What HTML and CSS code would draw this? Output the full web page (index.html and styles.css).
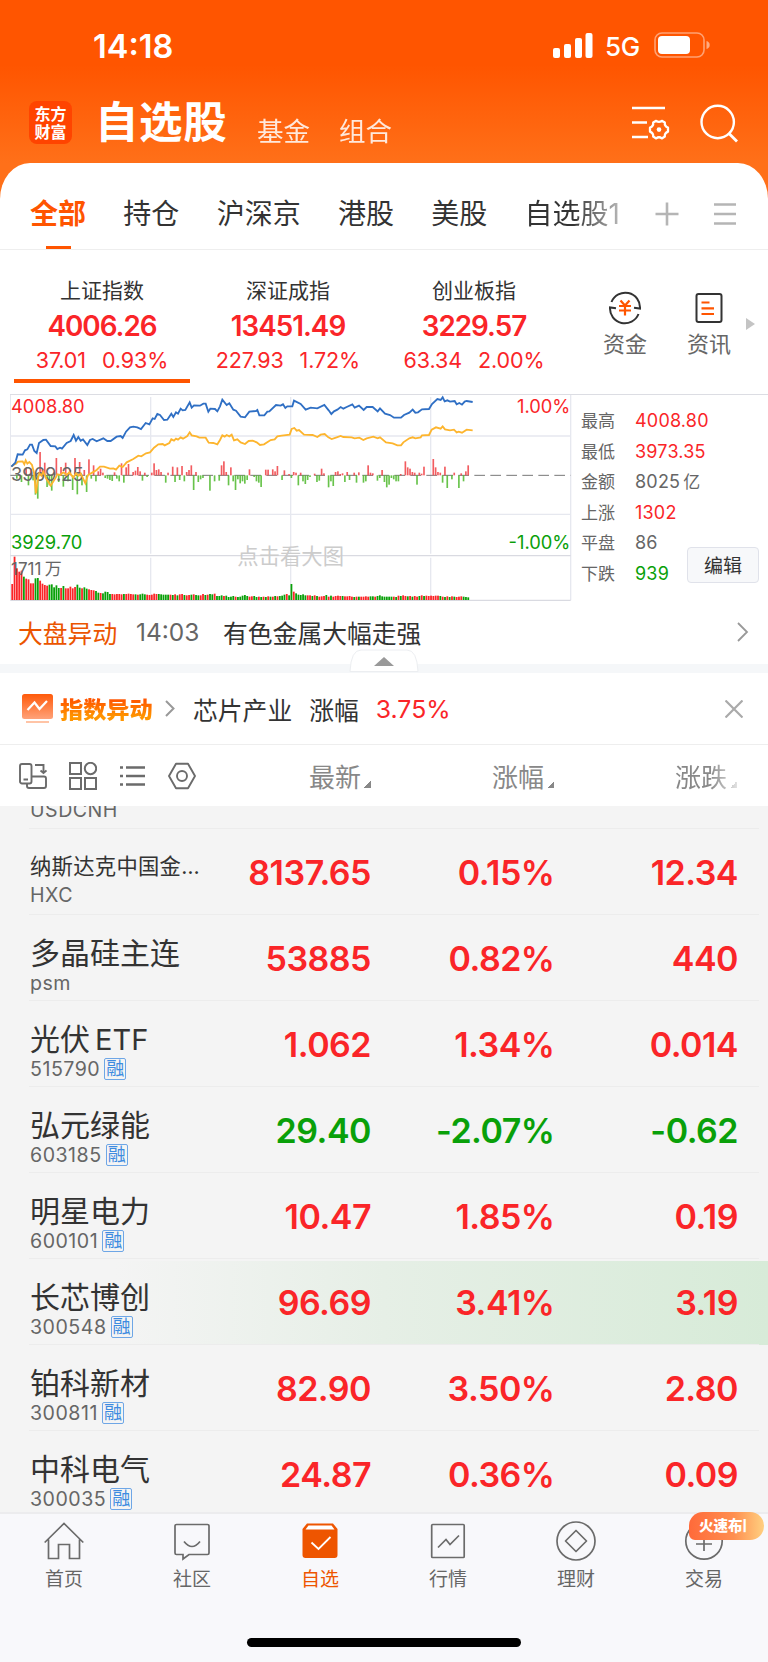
FILE: index.html
```html
<!DOCTYPE html>
<html lang="zh-CN">
<head>
  <meta charset="utf-8">
  <title>自选股</title>
  <link rel="stylesheet" href="styles.css">
</head>
<body>
  <header class="header">
    <div class="status">
      <span class="time">14:18</span>
      <svg class="signal" width="40" height="25" viewBox="0 0 40 25" fill="#fff">
        <rect x="0" y="15" width="7" height="10" rx="2"/>
        <rect x="11" y="11" width="7" height="14" rx="2"/>
        <rect x="22" y="5" width="7" height="20" rx="2"/>
        <rect x="32.500" y="0" width="7" height="25" rx="2"/>
      </svg>
      <span class="net">5G</span>
      <svg class="battery" width="57" height="26" viewBox="0 0 57 26">
        <rect x="1" y="1" width="49" height="24" rx="7" fill="none" stroke="#fff" stroke-opacity=".45" stroke-width="1.600"/>
        <rect x="4" y="4" width="32" height="18" rx="4" fill="#fff"/>
        <path d="M52.500 9v8c2-.6 3.200-2 3.200-4s-1.200-3.400-3.200-4z" fill="#fff" fill-opacity=".5"/>
      </svg>
    </div>
    <div class="title-bar">
      <div class="logo"><span>东方</span><span>财富</span></div>
      <h1>自选股</h1>
      <a class="sub">基金</a>
      <a class="sub">组合</a>
      <svg class="manage" width="40" height="36" viewBox="0 0 40 36" fill="none" stroke="#fff" stroke-width="2.500">
        <path d="M1 3h33M1 17.500h15M1 32h16"/>
        <path d="M25.200 15.800q2.800 2.200 5.600 0l3 1.800q-.4 3.600 3.200 5v4q-3.600 1.400-3.200 5l-3 1.800q-2.800-2.200-5.600 0l-3-1.800q.4-3.600-3.200-5v-4q3.600-1.400 3.200-5z" stroke-linejoin="round" stroke-width="2.300"/>
        <circle cx="28" cy="24.600" r="2.300" fill="#fff" stroke="none"/>
      </svg>
      <svg class="search" width="38" height="39" viewBox="0 0 38 39" fill="none" stroke="#fff" stroke-width="2.400">
        <circle cx="17.700" cy="18" r="16.200"/>
        <path d="M29 29.500l8 8" stroke-width="2.800"/>
      </svg>
    </div>
  </header>

  <main class="panel">
    <nav class="groups">
      <a class="active">全部</a>
      <a>持仓</a>
      <a>沪深京</a>
      <a>港股</a>
      <a>美股</a>
      <a class="fade">自选股1</a>
      <svg class="add" width="24" height="24" viewBox="0 0 24 24" stroke="#b5b5b5" stroke-width="2.600"><path d="M.5 12h23M12 .5v23"/></svg>
      <svg class="menu" width="22" height="22" viewBox="0 0 22 22" stroke="#b5b5b5" stroke-width="2.400"><path d="M0 1.500h22M0 11h22M0 20.500h22"/></svg>
    </nav>

    <section class="indexes">
      <div class="index active">
        <div class="name">上证指数</div>
        <div class="value">4006.26</div>
        <div class="change"><span>37.01</span><span>0.93%</span></div>
      </div>
      <div class="index">
        <div class="name">深证成指</div>
        <div class="value">13451.49</div>
        <div class="change"><span>227.93</span><span>1.72%</span></div>
      </div>
      <div class="index">
        <div class="name">创业板指</div>
        <div class="value">3229.57</div>
        <div class="change"><span>63.34</span><span>2.00%</span></div>
      </div>
      <div class="shortcut funds">
        <svg width="34" height="34" viewBox="0 0 34 34" fill="none" stroke="#333" stroke-width="2">
          <path d="M3.500 11A14.800 14.800 0 0 1 32 17.500l-6-.8M30.500 23A14.800 14.800 0 0 1 2 16.500l6 .8"/>
          <path d="M12.500 9.500l4.500 5 4.500-5M11 15h12M11 19.500h12M17 14.500v10" stroke="#ff5500" stroke-width="2.200"/>
        </svg>
        <span>资金</span>
      </div>
      <div class="shortcut">
        <svg width="28" height="34" viewBox="0 0 28 34" fill="none" stroke="#333" stroke-width="2">
          <rect x="1.500" y="3" width="25" height="28" rx="2"/>
          <path d="M6.500 11.500h8M6.500 17.300h12.500M6.500 23h12.500" stroke="#ff5500" stroke-width="2.200"/>
        </svg>
        <span>资讯</span>
      </div>
      <svg class="more" width="9" height="12" viewBox="0 0 9 12"><path d="M0 0l9 6-9 6z" fill="#c4c4c4"/></svg>
    </section>

    <section class="market">
      <svg class="chart" id="chart" viewBox="30 30 1686 624">
        <path class="grid" d="M31 28V646M452 36V506M452 518V646M872 36V506M872 518V646M1292 36V506M1292 518V646M1712 28V646M31 153H1712M31 388H1712"/>
        <path class="frame" d="M31 512H1712M31 646H1712"/>
        <path class="zero" d="M31 271H1712"/>
        <g id="bars"></g>
        <text class="up" x="33" y="84">4008.80</text>
        <text class="flat" x="33" y="288">3969.25</text>
        <text class="down" x="33" y="492">3929.70</text>
        <text class="flat vol" x="33" y="569">1711<tspan dx="10">万</tspan></text>
        <text class="up" x="1711" y="84" text-anchor="end">1.00%</text>
        <text class="down" x="1711" y="492" text-anchor="end">-1.00%</text>
        <text class="hint" x="872" y="536" text-anchor="middle">点击看大图</text>
        <polyline class="avg" points="34,245 40,240 48,236 54,230 68,229 73,238 77,226 82,236 88,231 96,240 102,263 108,325 114,280 118,265 124,272 130,260 138,280 152,302 166,280 172,268 180,270 190,262 200,270 208,262 220,278 228,265 236,272 242,265 256,295 264,270 278,262 290,255 300,245 312,245 330,251 340,250 348,254 358,242 368,246 380,232 400,222 415,212 424,214 438,205 450,202 462,188 475,178 488,177 494,181 508,174 514,163 522,167 528,161 534,164 542,157 549,161 562,153 569,142 575,151 590,154 598,158 617,158 626,173 640,174 652,178 660,165 667,151 674,155 680,150 688,154 695,149 702,166 712,163 722,172 735,177 746,168 758,167 770,172 780,180 792,178 812,165 824,163 832,154 845,152 869,149 875,132 883,129 890,137 897,135 912,149 938,150 952,156 962,149 974,147 985,157 995,162 1010,157 1022,153 1030,156 1055,157 1064,160 1078,158 1090,165 1100,160 1120,155 1133,160 1140,157 1158,172 1178,175 1192,181 1203,181 1210,172 1228,160 1238,157 1246,160 1262,157 1266,151 1287,150 1295,134 1308,127 1322,131 1328,124 1335,133 1350,136 1362,134 1370,142 1376,140 1386,143 1400,134 1418,136"/>
        <polyline class="price" points="34,245 46,233 53,208 68,209 75,196 82,193 90,179 96,179 103,198 110,204 117,174 130,165 138,164 152,183 166,184 172,192 180,188 186,191 200,174 212,168 221,150 228,167 235,156 242,167 249,163 262,180 270,165 278,162 290,169 310,160 322,168 332,168 350,155 362,153 368,159 378,140 390,127 400,125 412,127 423,132 437,114 448,118 458,100 464,102 472,87 480,90 492,105 502,104 514,86 520,96 528,82 534,86 542,71 548,76 556,75 569,52 575,68 582,61 600,62 610,56 617,56 625,80 631,71 645,72 652,79 660,64 667,44 680,60 688,55 700,74 708,77 722,95 735,97 748,80 768,78 772,75 778,91 793,91 802,80 808,79 828,60 842,62 849,58 856,69 862,64 877,64 882,47 902,57 917,74 932,68 952,70 973,60 986,76 994,87 1002,79 1012,74 1022,66 1030,71 1040,66 1057,58 1064,68 1077,62 1091,75 1100,66 1118,66 1133,79 1140,70 1155,86 1170,90 1182,98 1203,98 1212,90 1228,83 1238,74 1246,83 1254,82 1266,73 1287,72 1296,57 1312,42 1322,45 1328,37 1334,49 1342,46 1350,50 1364,48 1370,58 1378,54 1386,59 1394,50 1400,48 1418,51"/>
      </svg>
      <div class="stats">
        <dl>
          <dt>最高</dt><dd class="up">4008.80</dd>
          <dt>最低</dt><dd class="up">3973.35</dd>
          <dt>金额</dt><dd>8025<small>亿</small></dd>
          <dt>上涨</dt><dd class="up">1302</dd>
          <dt>平盘</dt><dd>86</dd>
          <dt>下跌</dt><dd class="down">939</dd>
        </dl>
        <button class="edit">编辑</button>
      </div>
    </section>

    <section class="news">
      <span class="tag">大盘异动</span>
      <span class="at">14:03</span>
      <span class="text">有色金属大幅走强</span>
      <svg class="go" width="12" height="20" viewBox="0 0 12 20" fill="none" stroke="#999" stroke-width="1.800"><path d="M1 1l9 9-9 9"/></svg>
    </section>
    <div class="strip">
      <svg class="handle" width="70" height="24" viewBox="0 0 70 24">
        <path d="M1 22.500Q2 1 12 1h46q10 0 11 21.500z" fill="#fff" stroke="#eceef1"/>
        <path d="M25 17l10-9 10 9z" fill="#999"/>
      </svg>
    </div>

    <section class="alert">
      <svg class="alert-icon" width="31" height="30" viewBox="0 0 31 30">
        <defs><linearGradient id="g" x1="0" y1="0" x2="0" y2="1"><stop offset="0" stop-color="#ff5a0a"/><stop offset="1" stop-color="#ffa27a"/></linearGradient></defs>
        <rect width="31" height="25" rx="2.500" fill="url(#g)"/>
        <path d="M5.500 16l7-7.500 5 6.500 7.500-8" fill="none" stroke="#fff" stroke-width="2.200"/>
        <path d="M4 28h23" stroke="#ffc4a6" stroke-width="2"/>
      </svg>
      <b>指数异动</b>
      <svg class="chev" width="10" height="17" viewBox="0 0 10 17" fill="none" stroke="#999" stroke-width="2"><path d="M1 1l7.500 7.500L1 16"/></svg>
      <span class="sector">芯片产业</span>
      <span class="label">涨幅</span>
      <span class="rate">3.75%</span>
      <svg class="close" width="18" height="18" viewBox="0 0 18 18" stroke="#aaa" stroke-width="2.200"><path d="M.5.5l17 17M17.500.5l-17 17"/></svg>
    </section>

    <section class="columns">
      <div class="tools">
        <svg width="28" height="28" viewBox="0 0 28 28" fill="none" stroke="#6b6b6b" stroke-width="1.900">
          <rect x="1" y="2" width="11.500" height="19.500" rx="2"/>
          <path d="M4.500 17.500h4.500M16 3h8.500v7.500M21.500 8.500l3 2.500 3-2.500M13 14.500h12q2 0 2 2v7.500q0 2-2 2H10q-2 0-2-2V22"/>
        </svg>
        <svg width="28" height="28" viewBox="0 0 28 28" fill="none" stroke="#6b6b6b" stroke-width="2">
          <rect x="1" y="1" width="11" height="11"/><circle cx="21.500" cy="6.500" r="5.700"/>
          <rect x="1" y="16" width="11" height="11"/><rect x="16" y="16" width="11" height="11"/>
        </svg>
        <svg width="28" height="28" viewBox="0 0 28 28" fill="none" stroke="#6b6b6b" stroke-width="2.700">
          <path d="M2 5.500h3M2 14h3M2 22.500h3M8 5.500h19M8 14h19M8 22.500h19"/>
        </svg>
        <svg width="28" height="28" viewBox="0 0 28 28" fill="none" stroke="#6b6b6b" stroke-width="1.900" stroke-linejoin="round">
          <path d="M8 1.700h12L27 14l-7 12.300H8L1 14z"/><circle cx="14" cy="14" r="5"/>
        </svg>
      </div>
      <span class="col">最新<i></i></span>
      <span class="col">涨幅<i></i></span>
      <span class="col last">涨跌<i></i></span>
    </section>

    <section class="list">
      <div class="row cut"><div class="stock"><small>USDCNH</small></div></div>
      <div class="row up">
        <div class="stock"><strong class="long">纳斯达克中国金…</strong><small>HXC</small></div>
        <span>8137.65</span><span>0.15%</span><span>12.34</span>
      </div>
      <div class="row up">
        <div class="stock"><strong>多晶硅主连</strong><small>psm</small></div>
        <span>53885</span><span>0.82%</span><span>440</span>
      </div>
      <div class="row up">
        <div class="stock"><strong>光伏<em>ETF</em></strong><small>515790<i>融</i></small></div>
        <span>1.062</span><span>1.34%</span><span>0.014</span>
      </div>
      <div class="row down">
        <div class="stock"><strong>弘元绿能</strong><small>603185<i>融</i></small></div>
        <span>29.40</span><span>-2.07%</span><span>-0.62</span>
      </div>
      <div class="row up">
        <div class="stock"><strong>明星电力</strong><small>600101<i>融</i></small></div>
        <span>10.47</span><span>1.85%</span><span>0.19</span>
      </div>
      <div class="row up flash">
        <div class="stock"><strong>长芯博创</strong><small>300548<i>融</i></small></div>
        <span>96.69</span><span>3.41%</span><span>3.19</span>
      </div>
      <div class="row up">
        <div class="stock"><strong>铂科新材</strong><small>300811<i>融</i></small></div>
        <span>82.90</span><span>3.50%</span><span>2.80</span>
      </div>
      <div class="row up">
        <div class="stock"><strong>中科电气</strong><small>300035<i>融</i></small></div>
        <span>24.87</span><span>0.36%</span><span>0.09</span>
      </div>
    </section>
  </main>

  <footer class="footer">
    <nav class="tabbar">
      <a>
        <svg width="40" height="40" viewBox="0 0 40 40"><path d="M.7 21.500L20 2.500l19.300 19M4.500 18.500v19h10V23.500h11v14h10v-19"/></svg>
        首页
      </a>
      <a>
        <svg width="40" height="40" viewBox="0 0 40 40"><path d="M4.500 3.500h31q1.500 0 1.500 1.500v27q0 1.500-1.500 1.500H17L11 38v-4.500H4.500Q3 33.500 3 32V5q0-1.500 1.500-1.500zM12 20.500q8 10 16 0"/></svg>
        社区
      </a>
      <a class="active">
        <svg class="solid" width="40" height="40" viewBox="0 0 40 40"><path d="M7 2.500h26l4.500 5.500v26q0 3-3 3h-29q-3 0-3-3V8z"/><path d="M8.500 4.500h23l3 4h-29z" fill="#fff"/><path d="M11.500 21.500l7 6.500L30.500 16" fill="none" stroke="#fff" stroke-width="1.800"/></svg>
        自选
      </a>
      <a>
        <svg width="40" height="40" viewBox="0 0 40 40"><rect x="3.700" y="3.500" width="32.500" height="33" rx="1"/><path d="M10 26.500l8-8 4 5 9-9"/></svg>
        行情
      </a>
      <a>
        <svg width="40" height="40" viewBox="0 0 40 40"><circle cx="20" cy="20" r="19"/><path d="M20 9.500L30.500 20 20 30.500 9.500 20z" stroke-linejoin="round"/></svg>
        理财
      </a>
      <a>
        <svg width="40" height="40" viewBox="0 0 40 40"><circle cx="20" cy="20" r="18.200"/><path d="M12 17.500h16M12 23h16M20 12v18M13 9l7 8 7-8"/></svg>
        交易
        <span class="promo">火速布<small>|</small></span>
      </a>
    </nav>
    <div class="home-bar"></div>
  </footer>
  <script src="chart.js"></script>
</body>
</html>
```
FILE: styles.css
```css
* {
  box-sizing: border-box;
}

body {
  margin: 0;
  width: 768px;
  height: 1662px;
  overflow: hidden;
  background: #fff;
  color: #333;
  font-family: Inter, "Noto Sans CJK SC", sans-serif;
}

svg {
  display: block;
  flex: none;
}

.up {
  color: #fa2528;
  fill: #fa2528;
}

.down {
  color: #09a009;
  fill: #09a009;
}

/* header */
.header {
  height: 204px;
  background: linear-gradient(#ff5500 65px, #ff7019 163px);
  color: #fff;
}

.status {
  display: flex;
  align-items: center;
  height: 93px;
}

.time {
  width: 460px;
  padding-left: 93px;
  font-size: 32.500px;
  font-weight: 600;
}

.signal {
  margin-left: 93px;
  margin-top: -2px;
}

.net {
  width: 48px;
  margin-left: 12px;
  font-size: 26px;
  font-weight: 500;
  letter-spacing: -0.2px;
}

.battery {
  margin-left: 1px;
  margin-top: -3px;
}

.title-bar {
  display: flex;
  align-items: center;
  height: 60px;
}

.logo {
  display: flex;
  flex-direction: column;
  align-items: center;
  justify-content: center;
  width: 43px;
  height: 43px;
  margin: -1px 0 0 29px;
  border-radius: 8px;
  background: #ff4400;
  font-size: 16px;
  font-weight: 700;
  line-height: 18px;
}

.title-bar h1 {
  margin: -2px 0 0 23px;
  width: 162px;
  font-size: 43.500px;
  font-weight: 700;
  letter-spacing: .6px;
  line-height: 60px;
}

.sub {
  width: 82px;
  margin-top: 15px;
  font-size: 26.500px;
  line-height: 36px;
  opacity: .85;
}

.manage {
  margin-left: 210px;
}

.search {
  margin-left: 29px;
}

/* white panel */
.panel {
  position: relative;
  height: 1349px;
  margin-top: -41px;
  overflow: hidden;
  border-radius: 30px 30px 0 0 / 36px 36px 0 0;
  background: #fff;
}

.groups {
  display: flex;
  align-items: center;
  gap: 37.300px;
  height: 87px;
  padding: 15px 0 0 30px;
  border-bottom: 1px solid #eee;
  font-size: 28px;
}

.groups a {
  height: 71px;
  line-height: 73px;
  white-space: nowrap;
}

.groups .active {
  color: #ff5500;
  font-weight: 700;
  background: linear-gradient(#ff5500, #ff5500) center bottom / 25px 3px no-repeat;
}

.groups .fade {
  width: 96px;
  background: linear-gradient(90deg, #333 50%, #bbb 100%);
  background-clip: text;
  -webkit-background-clip: text;
  color: transparent;
}

.add {
  margin-left: -3px;
}

.menu {
  margin-left: -2px;
}

.indexes {
  display: flex;
  height: 144px;
  padding-left: 9px;
}

.index {
  width: 186px;
  padding-top: 26px;
  text-align: center;
}

.index.active {
  background: linear-gradient(#ff5500, #ff5500) 5px 129px / 176px 4px no-repeat;
}

.index .name {
  font-size: 21px;
  line-height: 30px;
}

.index .value {
  margin-top: 2px;
  color: #fa2528;
  font-size: 27.800px;
  font-weight: 600;
  letter-spacing: -1px;
  line-height: 36px;
}

.index .change {
  display: flex;
  justify-content: center;
  gap: 16px;
  margin-top: 1px;
  color: #fa2528;
  font-size: 21.500px;
  letter-spacing: -.1px;
  line-height: 30px;
}

.shortcut {
  display: flex;
  flex-direction: column;
  align-items: center;
  width: 84px;
  padding-top: 41px;
  color: #666;
  font-size: 22px;
  line-height: 38px;
}

.funds {
  margin-left: 16px;
}

.more {
  margin: 68px 0 0 -5px;
}

/* intraday chart */
.market {
  display: flex;
  height: 208px;
  margin-left: 10px;
  border-top: 1px solid #dcdde3;
}

.chart {
  width: 562px;
  height: 208px;
}

.chart text {
  font-size: 55px;
}

.chart .flat {
  fill: #666;
}

.chart .vol {
  font-size: 51px;
}

.chart .hint {
  fill: #ccc;
  font-size: 64px;
}

.grid {
  fill: none;
  stroke: #e6e8ef;
  stroke-width: 4;
}

.frame {
  stroke: #d9dae1;
  stroke-width: 4;
}

.zero {
  stroke: #777;
  stroke-width: 3;
  stroke-dasharray: 32 16;
}

.price,
.avg {
  fill: none;
  stroke: #2f6fc4;
  stroke-width: 5.500;
}

.avg {
  stroke: #fdb52e;
}

.stats {
  position: relative;
  width: 196px;
  padding: 11px 0 0 9px;
}

.stats dl {
  display: grid;
  grid-template-columns: 54px 1fr;
  margin: 0;
  font-size: 17px;
  line-height: 30.500px;
  color: #666;
}

.stats dd {
  margin: 0;
  font-size: 18px;
  letter-spacing: .2px;
}

.stats dd.up {
  color: #fa2528;
}

.stats dd.down {
  color: #09a009;
}

.stats small {
  margin-left: 3px;
  font-size: 17px;
}

.edit {
  position: absolute;
  left: 115px;
  top: 152px;
  width: 72px;
  height: 36px;
  padding: 0;
  border: 1px solid #e0e2ea;
  border-radius: 4px;
  background: #f7f8fa;
  color: #333;
  font: 19px/34px "Noto Sans CJK SC", sans-serif;
}

.news {
  display: flex;
  align-items: center;
  height: 62px;
  padding: 0 0 2px 18px;
  font-size: 24.800px;
}

.news .tag {
  width: 118px;
  color: #eb5500;
}

.news .at {
  width: 87px;
  color: #666;
  font-size: 24.500px;
}

.news .go {
  margin-left: auto;
  margin-right: 19px;
}

.strip {
  position: relative;
  height: 9px;
  background: #f5f7f9;
}

.handle {
  position: absolute;
  left: 349px;
  top: -15px;
}

/* sector alert */
.alert {
  display: flex;
  align-items: center;
  height: 72px;
  padding-left: 22px;
  border-bottom: 1px solid #eee;
  font-size: 24.800px;
}

.alert b {
  width: 105px;
  margin: -2px 0 0 7px;
  background: linear-gradient(#ff5500 25%, #ff9500 75%);
  background-clip: text;
  -webkit-background-clip: text;
  color: transparent;
  font-size: 23.200px;
  font-weight: 900;
}

.sector {
  margin-left: 18px;
}

.label {
  margin-left: 17px;
}

.rate {
  margin-left: 17px;
  color: #fa2528;
}

.close {
  margin-left: auto;
  margin-right: 25px;
}

.columns {
  display: flex;
  align-items: center;
  height: 61px;
  color: #888;
  font-size: 26px;
}

.tools {
  display: flex;
  gap: 21.500px;
  width: 200px;
  padding-left: 19px;
}

.col {
  display: flex;
  justify-content: flex-end;
  align-items: flex-end;
  width: 183px;
}

.col:nth-of-type(1) {
  width: 171px;
}

.col i {
  width: 7px;
  height: 7px;
  margin: 0 0 6px 3px;
  background: linear-gradient(135deg, transparent 50%, #888 50%);
}

.col.last {
  width: 183px;
  -webkit-mask-image: linear-gradient(90deg, #000 85%, rgba(0, 0, 0, .25));
  mask-image: linear-gradient(90deg, #000 85%, rgba(0, 0, 0, .25));
}

/* watch list */
.list {
  height: 706px;
  overflow: hidden;
  background: #f4f4f4;
}

.row {
  position: relative;
  display: flex;
  height: 86px;
  font-size: 34px;
  font-weight: 600;
  letter-spacing: -.5px;
  line-height: 88px;
}

.row::after {
  content: "";
  position: absolute;
  left: 29px;
  right: 9px;
  bottom: 0;
  height: 1px;
  background: #ececec;
}

.row > span {
  width: 183.500px;
  text-align: right;
}

.row > span:nth-of-type(1) {
  width: 140px;
}

.stock {
  display: flex;
  flex-direction: column;
  width: 231px;
  padding: 17px 0 0 30px;
  color: #333;
  font-weight: 400;
  letter-spacing: 0;
}

.stock strong {
  height: 41px;
  font-size: 30px;
  font-weight: 400;
  line-height: 42px;
}

.stock strong.long {
  height: 39px;
  font-size: 21.300px;
  letter-spacing: .3px;
  line-height: 41px;
}

.stock em {
  margin-left: 5px;
  font-style: normal;
  font-size: 29px;
}

.stock small {
  display: flex;
  align-items: center;
  height: 20px;
  color: #666;
  font-size: 19.600px;
  letter-spacing: .5px;
  line-height: 20px;
}

.stock small i {
  width: 22px;
  height: 22px;
  margin-left: 4px;
  border: 1px solid #6ea6e6;
  border-radius: 2px;
  color: #3d8be0;
  font-size: 18px;
  font-style: normal;
  letter-spacing: 0;
  line-height: 20px;
  text-align: center;
}

.row.cut {
  height: 23px;
}

.row.cut .stock {
  padding-top: 0;
}

.row.cut small {
  margin-top: -6px;
}

.flash {
  background: linear-gradient(90deg, rgba(226, 238, 226, 0) 15%, #e6efe6 50%, #d7ebd8) 0 2px no-repeat;
}

/* bottom tabs */
.footer {
  height: 150px;
  border-top: 2px solid #ececee;
  background: #f8f8fb;
}

.tabbar {
  display: flex;
}

.tabbar a {
  position: relative;
  display: flex;
  flex-direction: column;
  align-items: center;
  width: 128px;
  height: 124px;
  padding-top: 7px;
  color: #666;
  font-size: 19px;
  line-height: 37px;
}

.tabbar svg {
  fill: none;
  stroke: #6b6b6b;
  stroke-width: 1.700;
}

.tabbar .active {
  color: #ee5500;
}

.tabbar .solid {
  fill: #ee5500;
  stroke: none;
}

.promo {
  position: absolute;
  left: 49px;
  top: -2px;
  width: 75px;
  height: 28px;
  padding-left: 10px;
  border-radius: 14px 14px 14px 6px;
  background: linear-gradient(90deg, #ff6a3a, #ff8f50 60%, #ffd080);
  color: #fff;
  font-size: 14.500px;
  font-weight: 900;
  line-height: 27px;
}

.promo small {
  font-size: 11px;
  vertical-align: 1px;
}

.home-bar {
  width: 274px;
  height: 9px;
  margin: 0 auto;
  border-radius: 5px;
  background: #000;
}
```
FILE: chart.js
```js
var bars = document.getElementById('bars');

// one value per minute, negative = falling
var volume = [48,130,95,85,88,-70,64,62,50,50,-65,-66,58,49,45,43,-46,-47,-38,-44,-36,36,-42,35,35,40,35,39,-46,-37,35,-38,-34,32,30,29,-27,-22,21,-20,-25,-24,-18,18,17,18,18,17,-18,18,19,18,17,-17,16,-17,-19,-17,16,15,16,19,18,-18,-17,-16,-16,-16,16,-15,17,-14,17,18,-15,14,15,-16,17,-15,-14,14,18,-15,16,-18,-17,19,-12,-12,-14,12,-13,-9,-10,-12,10,-9,-10,-13,-15,-12,10,11,-12,-9,10,-9,10,-9,11,-10,10,-12,11,-12,-13,-16,18,-14,-48,25,-20,-16,-15,-17,-14,14,14,-12,14,-12,10,11,12,-15,10,-13,10,12,13,12,-12,11,11,12,10,-9,10,-10,10,10,11,10,-11,-11,10,-12,-14,-11,-10,-10,-10,-10,10,-9,13,-12,14,12,-11,12,-10,12,10,-12,14,-12,13,12,13,12,13,13,-12,10,-9,11,-9,11,-10,9,10,11,-10,-9,-8];

// net flow against the zero line: minute, size
var flow = [[2,-10],[4,-20],[6,20],[7,-30],[8,20],[9,-15],[10,-58],[11,-70],[12,70],[13,18],[14,38],[15,-35],[16,-30],[17,-46],[18,10],[19,52],[20,-20],[21,25],[22,-34],[23,38],[24,-18],[25,16],[26,-44],[27,52],[28,-57],[29,40],[30,-30],[31,16],[32,-50],[33,48],[34,-10],[35,30],[36,-18],[37,12],[38,20],[39,8],[40,-8],[41,-10],[42,-14],[43,-17],[44,9],[45,-10],[46,-18],[47,36],[48,-22],[49,24],[50,34],[52,10],[53,14],[54,25],[55,12],[56,-16],[57,8],[58,-5],[60,8],[61,36],[62,16],[63,18],[64,10],[66,-22],[67,8],[69,26],[70,-20],[71,24],[72,-14],[73,28],[74,-18],[75,10],[76,16],[77,30],[78,-44],[79,10],[80,-20],[81,-12],[82,-8],[85,-46],[87,-18],[89,-16],[90,30],[91,42],[92,10],[93,-30],[94,24],[95,-18],[96,-44],[97,-12],[98,-24],[99,-18],[100,-25],[101,-14],[102,18],[104,-5],[105,-18],[106,-22],[107,-35],[109,17],[110,17],[112,18],[113,12],[114,28],[116,-14],[117,15],[119,4],[120,-8],[121,10],[122,8],[123,-30],[124,8],[125,-18],[126,-26],[127,-14],[128,-5],[130,5],[131,-20],[132,-16],[133,20],[134,6],[136,-36],[137,-18],[138,-32],[139,10],[140,12],[141,4],[142,6],[143,-20],[144,10],[145,-14],[147,8],[148,-22],[149,9],[151,-22],[152,-18],[153,30],[154,8],[155,6],[157,-16],[158,-8],[159,16],[160,-20],[161,-36],[162,-28],[163,-8],[164,-12],[165,-18],[166,-18],[167,4],[169,42],[170,24],[171,20],[172,10],[173,8],[174,-28],[175,8],[176,5],[177,26],[181,49],[182,24],[183,10],[184,8],[185,-22],[186,26],[187,-38],[189,-12],[190,8],[192,-38],[193,6],[194,-18],[195,12],[196,30]];

function addBar(x, y, width, height, color, opacity) {
  var rect = document.createElementNS('http://www.w3.org/2000/svg', 'rect');
  rect.setAttribute('x', x);
  rect.setAttribute('y', y);
  rect.setAttribute('width', width);
  rect.setAttribute('height', height);
  rect.setAttribute('fill', color);
  rect.setAttribute('opacity', opacity);
  bars.appendChild(rect);
}

volume.forEach(function(v, i) {
  var h = Math.abs(v);
  addBar(34 + i * 6.98, 645 - h, 5.4, h, v > 0 ? '#fa2528' : '#09a009', 1);
});

flow.forEach(function(item) {
  var h = Math.abs(item[1]);
  addBar(34 + item[0] * 6.98, item[1] > 0 ? 271 - h : 271, 5, h, item[1] > 0 ? '#f04044' : '#4db82c', 0.85);
});
```
